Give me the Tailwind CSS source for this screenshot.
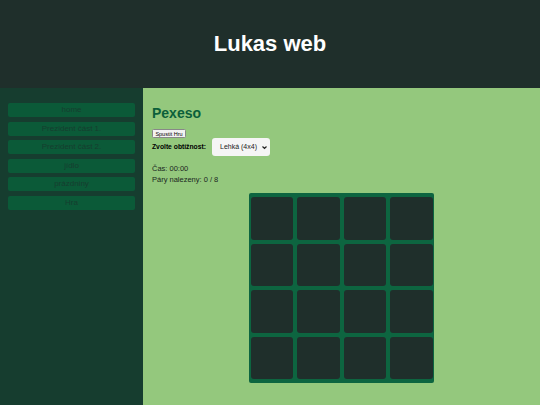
<!DOCTYPE html>
<html lang="cs">
<head>
<meta charset="utf-8">
<script src="https://cdn.jsdelivr.net/npm/@tailwindcss/browser@4"></script>
<title>Lukas web</title>
</head>
<body class="m-0 h-[405px] w-[540px] overflow-hidden font-['Liberation_Sans',Arial,sans-serif]">
<header class="flex h-[88px] items-center justify-center bg-[#1f2f2b]">
  <h1 class="text-[22px] leading-none font-bold text-white">Lukas web</h1>
</header>
<div class="flex h-[317px]">
  <nav class="w-[143px] shrink-0 bg-[#163d2f] pt-[15px] pl-[8px] pr-[8px]">
    <ul class="flex flex-col gap-[4.5px] text-center text-[8px] leading-[14px] text-[#163d2f]">
      <li class="h-[14px] rounded-[2px] bg-[#0b5a38]">home</li>
      <li class="h-[14px] rounded-[2px] bg-[#0b5a38]">Prezident část 1.</li>
      <li class="h-[14px] rounded-[2px] bg-[#0b5a38]">Prezident část 2.</li>
      <li class="h-[14px] rounded-[2px] bg-[#0b5a38]">jídlo</li>
      <li class="h-[14px] rounded-[2px] bg-[#0b5a38]">prázdniny</li>
      <li class="h-[14px] rounded-[2px] bg-[#0b5a38]">Hra</li>
    </ul>
  </nav>
  <main class="flex-1 bg-[#94c87d] pl-[9px] pr-[9px] pt-[17px]">
    <h2 class="text-[14px] leading-[17px] font-bold text-[#0b5f3a]">Pexeso</h2>
    <button class="mt-[7px] block h-[9px] w-[34px] rounded-[1.5px] border-[0.5px] border-[#888] bg-[#f2f2f2] text-center text-[5.5px] leading-[8px] text-black">Spustit Hru</button>
    <div class="flex h-[18px] items-center gap-[6px]">
      <span class="w-[54px] text-[6.75px] font-bold whitespace-nowrap text-black">Zvolte obtížnost:</span>
      <span class="flex h-[18px] w-[58px] items-center justify-between rounded-[3px] bg-[#f5f5f5] pl-[8px] pr-[3px] text-[7px] text-[#222]">Lehká (4x4)
        <svg class="h-[5px] w-[5px]" viewBox="0 0 10 10" fill="none" stroke="#222" stroke-width="2.4"><path d="M1 3l4 4 4-4"/></svg>
      </span>
    </div>
    <p class="mt-[7px] text-[7.5px] leading-[11px] text-[#1a261d]">Čas: 00:00</p>
    <p class="text-[7.5px] leading-[11px] text-[#1a261d]">Páry nalezeny: 0 / 8</p>
    <div class="mt-[8px] ml-[97px] grid h-[190px] w-[185px] grid-cols-4 grid-rows-4 gap-[4px] rounded-[2px] bg-[#0d6540] px-[1.5px] py-[4px]">
      <div class="rounded-[3px] bg-[#1f2f2b]"></div>
      <div class="rounded-[3px] bg-[#1f2f2b]"></div>
      <div class="rounded-[3px] bg-[#1f2f2b]"></div>
      <div class="rounded-[3px] bg-[#1f2f2b]"></div>
      <div class="rounded-[3px] bg-[#1f2f2b]"></div>
      <div class="rounded-[3px] bg-[#1f2f2b]"></div>
      <div class="rounded-[3px] bg-[#1f2f2b]"></div>
      <div class="rounded-[3px] bg-[#1f2f2b]"></div>
      <div class="rounded-[3px] bg-[#1f2f2b]"></div>
      <div class="rounded-[3px] bg-[#1f2f2b]"></div>
      <div class="rounded-[3px] bg-[#1f2f2b]"></div>
      <div class="rounded-[3px] bg-[#1f2f2b]"></div>
      <div class="rounded-[3px] bg-[#1f2f2b]"></div>
      <div class="rounded-[3px] bg-[#1f2f2b]"></div>
      <div class="rounded-[3px] bg-[#1f2f2b]"></div>
      <div class="rounded-[3px] bg-[#1f2f2b]"></div>
    </div>
  </main>
</div>
</body>
</html>
